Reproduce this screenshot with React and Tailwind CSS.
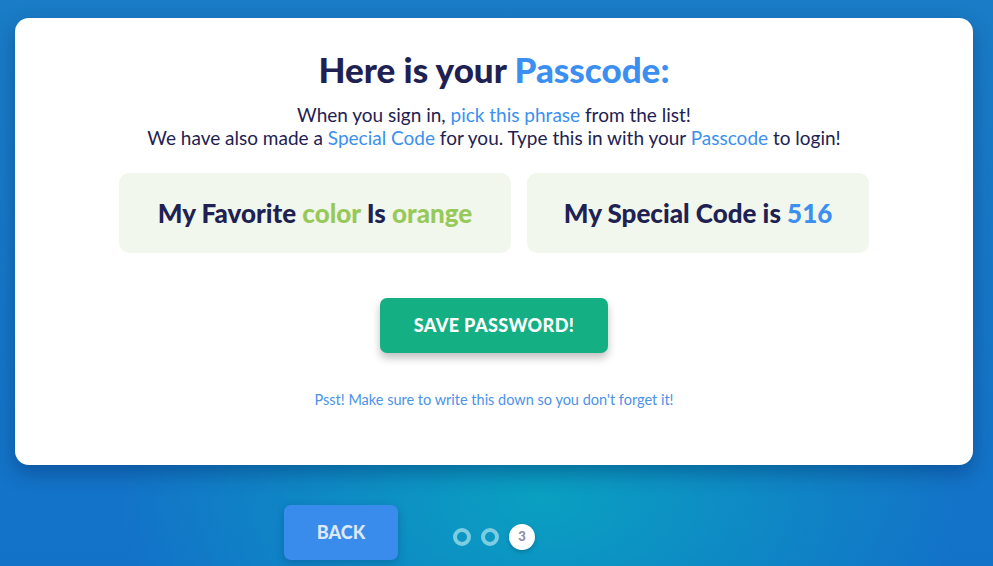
export default function App() {
  return (
    <div
      className="relative w-[993px] h-[566px] overflow-hidden bg-[#1676c4] font-['Lato',sans-serif]"
      style={{
        backgroundImage:
          'radial-gradient(ellipse 420px 260px at 540px 500px, rgba(8,168,192,0.85), rgba(8,168,192,0) 100%), linear-gradient(180deg, #1a7cc6 0%, #1272c8 100%)',
      }}
    >
      <div className="pt-[18px] pl-[15px]">
        <div className="w-[958px] bg-white rounded-[14px] h-[447px] shadow-[0_8px_20px_rgba(0,30,80,0.35)] flex flex-col items-center pt-[31px]">
          <h1 className="text-[35px] font-black leading-[40px] text-[#1e2152]">
            Here is your <span className="text-[#3b8ff0]">Passcode:</span>
          </h1>
          <p className="mt-[14px] text-[19px] leading-[23px] text-[#1e2152] text-center">
            When you sign in, <span className="text-[#3b8ff0]">pick this phrase</span> from the list!
            <br />
            We have also made a <span className="text-[#3b8ff0]">Special Code</span> for you. Type this in with your{' '}
            <span className="text-[#3b8ff0]">Passcode</span> to login!
          </p>
          <div className="mt-[24px] flex gap-[16px]">
            <div className="w-[392px] h-[80px] rounded-[10px] bg-[#f1f7ec] flex items-center justify-center">
              <span className="text-[26px] font-black text-[#1e2152]">
                My Favorite <span className="text-[#97c95a]">color</span> Is{' '}
                <span className="text-[#97c95a]">orange</span>
              </span>
            </div>
            <div className="w-[342px] h-[80px] rounded-[10px] bg-[#f1f7ec] flex items-center justify-center">
              <span className="text-[26px] font-black text-[#1e2152]">
                My Special Code is <span className="text-[#3b8ff0]">516</span>
              </span>
            </div>
          </div>
          <button className="mt-[45px] w-[228px] h-[55px] rounded-[7px] bg-[#14b083] text-white text-[18px] font-black tracking-[0.4px] shadow-[0_5px_8px_rgba(0,0,0,0.25)]">
            SAVE PASSWORD!
          </button>
          <p className="mt-[37px] text-[14.5px] leading-[20px] text-[#4a93e8]">
            Psst! Make sure to write this down so you don't forget it!
          </p>
        </div>
      </div>
      <div className="mt-[40px] pl-[284px] flex items-center">
        <button className="w-[114px] h-[55px] rounded-[7px] bg-[#398cec] text-[#dde8f5] text-[18px] font-black shadow-[0_3px_8px_rgba(0,40,90,0.25)]">
          BACK
        </button>
        <div className="ml-[55px] mt-[9px] flex items-center gap-[10px]">
          <div className="w-[18px] h-[18px] rounded-full border-[4px] border-[#7ccde0]" />
          <div className="w-[18px] h-[18px] rounded-full border-[4px] border-[#7ccde0]" />
          <div className="w-[26px] h-[26px] rounded-full bg-white flex items-center justify-center text-[13px] font-black text-[#8a8aa8] shadow-[0_2px_4px_rgba(0,0,0,0.2)]">
            3
          </div>
        </div>
      </div>
    </div>
  );
}
